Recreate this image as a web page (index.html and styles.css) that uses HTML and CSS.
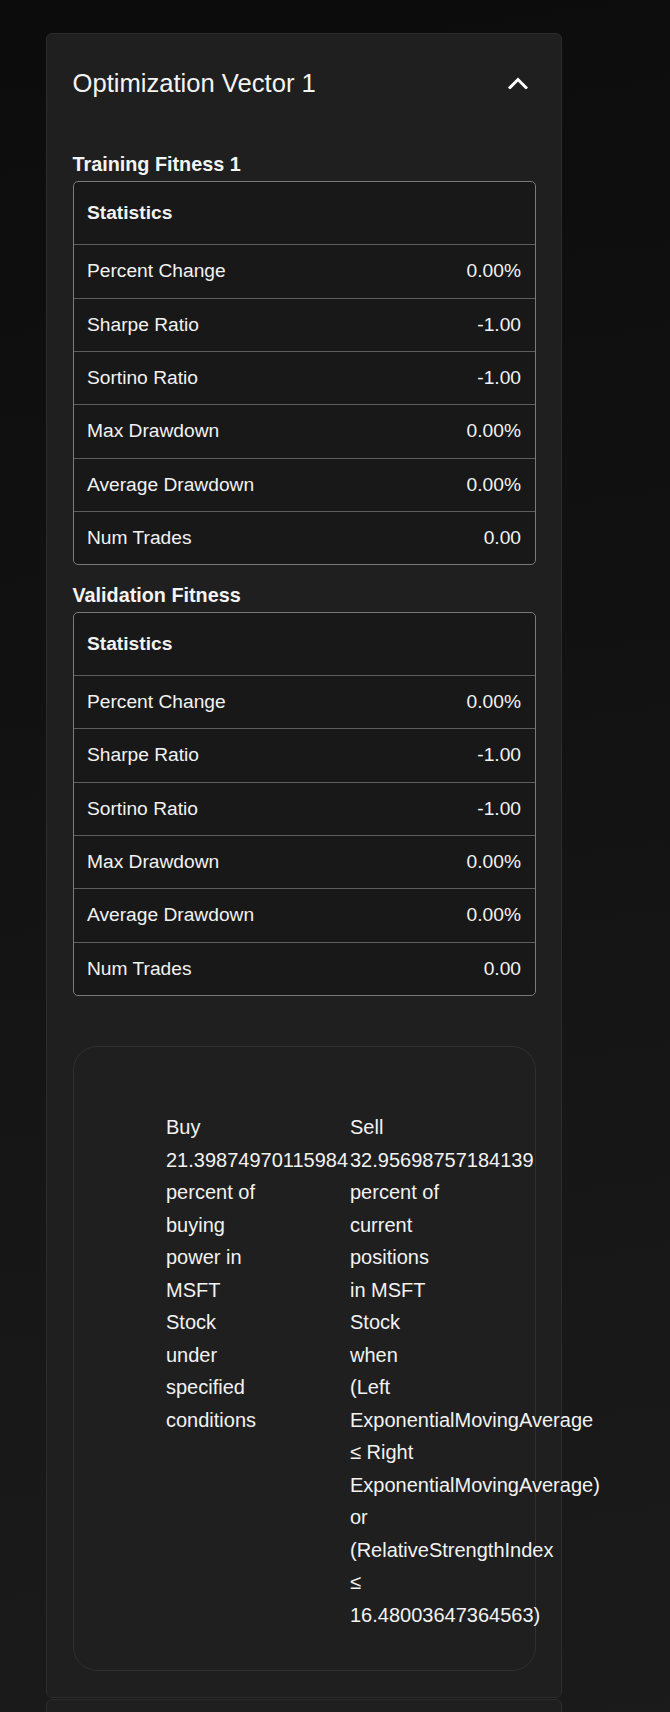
FILE: index.html
```html
<!DOCTYPE html>
<html lang="en">
<head>
<meta charset="utf-8">
<title>Optimization Vectors</title>
<link rel="stylesheet" href="styles.css">
</head>
<body>
<main class="list">
  <section class="card">
    <header class="card-header">
      <h2 class="card-title">Optimization Vector 1</h2>
      <svg class="chevron" width="20" height="12" viewBox="0 0 20 12" aria-hidden="true"><path d="M2 10.5 L10 2.5 L18 10.5" fill="none" stroke="#fff" stroke-width="3" stroke-linecap="square"/></svg>
    </header>

    <h3 class="section-title first">Training Fitness 1</h3>
    <div class="stats">
      <div class="stats-head">Statistics</div>
      <div class="stats-row"><span>Percent Change</span><span>0.00%</span></div>
      <div class="stats-row"><span>Sharpe Ratio</span><span>-1.00</span></div>
      <div class="stats-row"><span>Sortino Ratio</span><span>-1.00</span></div>
      <div class="stats-row"><span>Max Drawdown</span><span>0.00%</span></div>
      <div class="stats-row"><span>Average Drawdown</span><span>0.00%</span></div>
      <div class="stats-row"><span>Num Trades</span><span>0.00</span></div>
    </div>

    <h3 class="section-title">Validation Fitness</h3>
    <div class="stats">
      <div class="stats-head">Statistics</div>
      <div class="stats-row"><span>Percent Change</span><span>0.00%</span></div>
      <div class="stats-row"><span>Sharpe Ratio</span><span>-1.00</span></div>
      <div class="stats-row"><span>Sortino Ratio</span><span>-1.00</span></div>
      <div class="stats-row"><span>Max Drawdown</span><span>0.00%</span></div>
      <div class="stats-row"><span>Average Drawdown</span><span>0.00%</span></div>
      <div class="stats-row"><span>Num Trades</span><span>0.00</span></div>
    </div>

    <div class="rules">
      <div class="rule">Buy 21.39874970115984 percent of buying power in MSFT Stock under specified conditions</div>
      <div class="rule">Sell 32.95698757184139 percent of current positions in MSFT Stock when (Left ExponentialMovingAverage ≤ Right ExponentialMovingAverage) or (RelativeStrengthIndex ≤ 16.48003647364563)</div>
    </div>
  </section>

  <section class="card">
    <header class="card-header">
      <h2 class="card-title">Optimization Vector 2</h2>
      <svg class="chevron" width="20" height="12" viewBox="0 0 20 12" aria-hidden="true"><path d="M2 2.5 L10 10.5 L18 2.5" fill="none" stroke="#fff" stroke-width="3" stroke-linecap="square"/></svg>
    </header>
  </section>
</main>
</body>
</html>
```

FILE: styles.css
```css
html, body {
  margin: 0;
  padding: 0;
}

body {
  min-height: 1712px;
  background: linear-gradient(172deg, #0c0c0c 0%, #111111 35%, #181818 75%, #1b1b1b 100%);
  color: #f2f2f2;
  font-family: "Liberation Sans", Arial, Helvetica, sans-serif;
}

.list {
  display: flex;
  flex-direction: column;
  gap: 1.5px;
  width: 516px;
  margin-left: 46px;
  padding-top: 33px;
}

.card {
  box-sizing: border-box;
  background: #1f1f1f;
  border: 1px solid #2c2c2c;
  border-radius: 6px;
  padding: 0 25.5px 25.5px;
}

.card-header {
  display: flex;
  align-items: center;
  justify-content: space-between;
  padding-top: 33.5px;
}

.card-title {
  margin: 0;
  font-size: 25.6px;
  font-weight: 400;
  line-height: 31px;
  color: #f4f4f4;
}

.chevron {
  display: block;
  margin-right: 8px;
}

.section-title {
  margin: 17.5px 0 5px;
  font-size: 19.8px;
  font-weight: 700;
  line-height: 24px;
  color: #f4f4f4;
}

.section-title.first {
  margin-top: 53.5px;
}

.stats {
  background: #181818;
  border: 1px solid #7a7a7a;
  border-radius: 5px;
  overflow: hidden;
  font-size: 19.2px;
}

.stats-head {
  padding: 17px 13.5px;
  line-height: 28.33px;
  font-weight: 700;
  border-bottom: 1px solid #5e5e5e;
}

.stats-row {
  display: flex;
  justify-content: space-between;
  padding: 12px 13.5px;
  line-height: 28.33px;
  border-bottom: 1px solid #5e5e5e;
}

.stats-row:last-child {
  border-bottom: none;
}

.rules {
  display: grid;
  grid-template-columns: 91px 91px;
  column-gap: 93px;
  align-items: start;
  margin-top: 50px;
  padding: 64px 0 39px 92.5px;
  border: 1px solid #303030;
  border-radius: 24px;
  background: #1f1f1f;
  font-size: 20px;
  line-height: 32.5px;
  color: #f2f2f2;
}

.rule {
  overflow: visible;
  white-space: normal;
  word-break: normal;
}
```
